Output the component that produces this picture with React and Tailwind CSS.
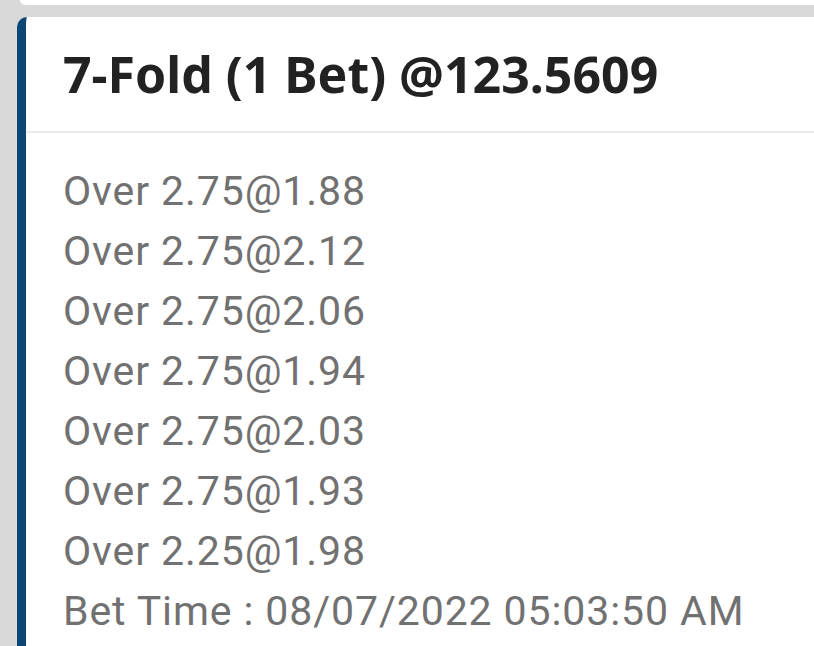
import React from 'react';

const legs = [
  'Over 2.75@1.88',
  'Over 2.75@2.12',
  'Over 2.75@2.06',
  'Over 2.75@1.94',
  'Over 2.75@2.03',
  'Over 2.75@1.93',
  'Over 2.25@1.98',
];

export default function App() {
  return (
    <div className="h-[646px] w-[814px] overflow-hidden bg-[#d9d9d9] font-['Roboto',sans-serif]">
      {/* previous card, only its bottom edge is visible */}
      <div className="ml-[20px] h-[5px] rounded-bl-lg bg-white" />

      <div className="mt-[12px] ml-[17px] h-[700px] rounded-tl-[10px] border-l-[9px] border-[#0b4675] bg-white">
        <div className="flex h-[116px] items-center border-b-2 border-[#ececec] pl-[37px]">
          <h2 className="text-[50px] font-bold text-[#222222] font-['Noto_Sans',sans-serif]">
            7-Fold (1 Bet) @123.5609
          </h2>
        </div>
        <div className="pl-[37px] pt-[28px] text-[41px] leading-[60px] tracking-[0.9px] text-[#717171]">
          {legs.map((leg, i) => (
            <div key={i}>{leg}</div>
          ))}
          <div>Bet Time : 08/07/2022 05:03:50 AM</div>
        </div>
      </div>
    </div>
  );
}
